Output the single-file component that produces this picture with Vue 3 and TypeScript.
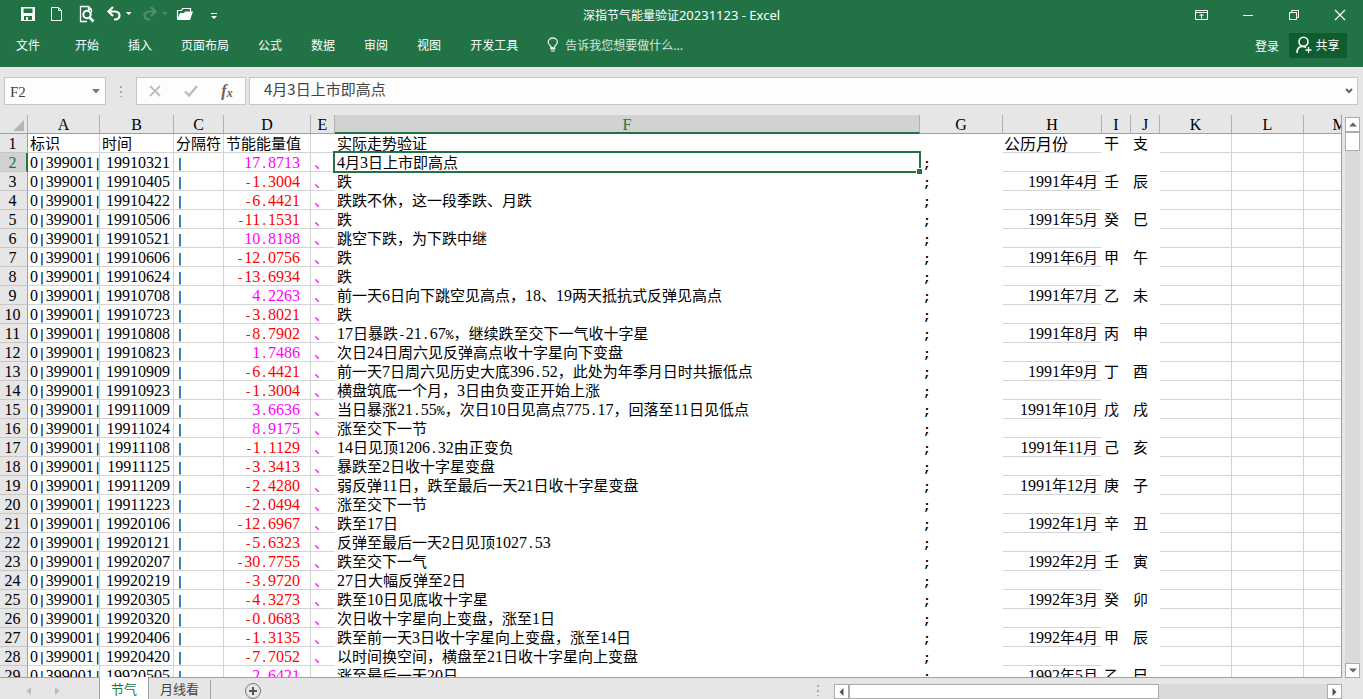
<script setup lang="ts">
import { ref } from 'vue'

interface Column { key: string; width: number }
interface Row { n: number; date: string; value: string; note: string; month: string; stem: string; branch: string }
interface Run { text: string; kind: 'num' | 'bar' | 'sym' | 'txt' }

const menus = ['文件', '开始', '插入', '页面布局', '公式', '数据', '审阅', '视图', '开发工具']

const columns: Column[] = [
  { key: 'A', width: 72 }, { key: 'B', width: 74 }, { key: 'C', width: 50 }, { key: 'D', width: 87 },
  { key: 'E', width: 24 }, { key: 'F', width: 585 }, { key: 'G', width: 83 }, { key: 'H', width: 99 },
  { key: 'I', width: 29 }, { key: 'J', width: 29 }, { key: 'K', width: 72 }, { key: 'L', width: 72 },
  { key: 'M', width: 72 },
]

const source: [string, string, string][] = [
  ['19910321', '17.8713', '4月3日上市即高点'],
  ['19910405', '-1.3004', '跌'],
  ['19910422', '-6.4421', '跌跌不休，这一段季跌、月跌'],
  ['19910506', '-11.1531', '跌'],
  ['19910521', '10.8188', '跳空下跌，为下跌中继'],
  ['19910606', '-12.0756', '跌'],
  ['19910624', '-13.6934', '跌'],
  ['19910708', '4.2263', '前一天6日向下跳空见高点，18、19两天抵抗式反弹见高点'],
  ['19910723', '-3.8021', '跌'],
  ['19910808', '-8.7902', '17日暴跌-21.67%，继续跌至交下一气收十字星'],
  ['19910823', '1.7486', '次日24日周六见反弹高点收十字星向下变盘'],
  ['19910909', '-6.4421', '前一天7日周六见历史大底396.52，此处为年季月日时共振低点'],
  ['19910923', '-1.3004', '横盘筑底一个月，3日由负变正开始上涨'],
  ['19911009', '3.6636', '当日暴涨21.55%，次日10日见高点775.17，回落至11日见低点'],
  ['19911024', '8.9175', '涨至交下一节'],
  ['19911108', '-1.1129', '14日见顶1206.32由正变负'],
  ['19911125', '-3.3413', '暴跌至2日收十字星变盘'],
  ['19911209', '-2.4280', '弱反弹11日，跌至最后一天21日收十字星变盘'],
  ['19911223', '-2.0494', '涨至交下一节'],
  ['19920106', '-12.6967', '跌至17日'],
  ['19920121', '-5.6323', '反弹至最后一天2日见顶1027.53'],
  ['19920207', '-30.7755', '跌至交下一气'],
  ['19920219', '-3.9720', '27日大幅反弹至2日'],
  ['19920305', '-4.3273', '跌至10日见底收十字星'],
  ['19920320', '-0.0683', '次日收十字星向上变盘，涨至1日'],
  ['19920406', '-1.3135', '跌至前一天3日收十字星向上变盘，涨至14日'],
  ['19920420', '-7.7052', '以时间换空间，横盘至21日收十字星向上变盘'],
  ['19920505', '2.6421', '涨至最后一天20日'],
]

const stems = '甲乙丙丁戊己庚辛壬癸'
const branches = '子丑寅卯辰巳午未申酉戌亥'

// Month, stem and branch appear on every second row, from April 1991 on.
const rows: Row[] = source.map(([date, value, note], i) => {
  const m = (i - 1) / 2
  const shown = i % 2 === 1
  const abs = 3 + m
  return {
    n: i + 2, date, value, note,
    month: shown ? `${1991 + Math.floor(abs / 12)}年${(abs % 12) + 1}月` : '',
    stem: shown ? stems[(8 + m) % 10] : '',
    branch: shown ? branches[(4 + m) % 12] : '',
  }
})

const headers: Record<string, string> = {
  A: '标识', B: '时间', C: '分隔符', D: '节能能量值', F: '实际走势验证', H: '公历月份', I: '干', J: '支',
}

function cell(row: Row, key: string): string {
  switch (key) {
    case 'A': return '0|399001|'
    case 'B': return row.date
    case 'C': return '|'
    case 'D': return row.value
    case 'E': return '、'
    case 'F': return row.note
    case 'G': return ';'
    case 'H': return row.month
    case 'I': return row.stem
    case 'J': return row.branch
    default: return ''
  }
}

function kindOf(text: string): Run['kind'] {
  if (/^[0-9]/.test(text)) return 'num'
  if (/^[-|]/.test(text)) return 'bar'
  if (/^[.%;]/.test(text)) return 'sym'
  return 'txt'
}

// Digits, half-width marks and Chinese text are set in different faces.
function runs(text: string): Run[] {
  return (text.match(/[0-9]+|[-|]+|[.%;]+|[^0-9.\-%|;]+/g) ?? []).map((t) => ({ text: t, kind: kindOf(t) }))
}

const address = ref('F2')
const formula = ref('4月3日上市即高点')
</script>

<template>
  <div class="app">
    <header class="top">
      <div class="titlebar">
        <div class="quick">
          <button class="q save" aria-label="保存">
            <svg width="16" height="16" viewBox="0 0 16 16"><path fill="#fff" fill-rule="evenodd" d="M1 1h14v14H1zM3.500 2.500v4.500h9V2.500zM4 10v4h2v-3h2v3h4v-4z" /></svg>
          </button>
          <button class="q" aria-label="新建">
            <svg width="14" height="16" viewBox="0 0 14 16"><path fill="none" stroke="#fff" d="M1.500 1.500h7l3 3v10h-10zM8.500 1.500v3h3" /></svg>
          </button>
          <button class="q preview" aria-label="打印预览">
            <svg width="16" height="18" viewBox="0 0 16 18"><path fill="none" stroke="#fff" stroke-width="1.300" d="M8 16.500H1.500v-15h8l3 3v3M9.500 1.500v3h3" /><circle cx="8" cy="9.500" r="3.700" fill="none" stroke="#fff" stroke-width="2" /><path stroke="#fff" stroke-width="2.500" d="M10.500 12.500l4 4" /></svg>
          </button>
          <button class="q undo" aria-label="撤消">
            <svg width="26" height="16" viewBox="0 0 26 16"><path fill="none" stroke="#fff" stroke-width="2.200" d="M1 5.500h7c6 0 6 8 0 8H7M6 1L1.500 5.500 6 10" /><path fill="#fff" d="M19 6h5.500l-2.700 3z" /></svg>
          </button>
          <button class="q redo" aria-label="恢复" disabled>
            <svg width="26" height="16" viewBox="0 0 26 16"><path fill="none" stroke="#4f9069" stroke-width="2.200" d="M14 5.500H7c-6 0-6 8 0 8h1M9 1l4.500 4.500L9 10" /><path fill="#4f9069" d="M20 6h5.500l-2.700 3z" /></svg>
          </button>
          <button class="q open" aria-label="打开">
            <svg width="18" height="16" viewBox="0 0 18 16"><path fill="none" stroke="#fff" stroke-width="1.200" d="M1.500 13V4.500h4l1-2h8V7" /><path fill="#fff" d="M4 7h4l1-1.500h8L14 14H1z" /></svg>
          </button>
          <button class="q more" aria-label="自定义快速访问工具栏">
            <svg width="8" height="8" viewBox="0 0 8 8"><path fill="#fff" d="M1 1h6v1H1zM1 4h6L4 7z" /></svg>
          </button>
        </div>
        <div class="title">深指节气能量验证<span class="latin">20231123 - Excel</span></div>
        <div class="window">
          <button aria-label="功能区显示选项"><svg width="14" height="12" viewBox="0 0 14 12"><path fill="none" stroke="#fff" d="M.5 1.500h12v9H.5zM.5 3.500h12M6.500 9.500V5M4.500 7l2-2 2 2" /></svg></button>
          <button aria-label="最小化"><svg width="12" height="12" viewBox="0 0 12 12"><path stroke="#fff" d="M1 6.500h10" /></svg></button>
          <button aria-label="还原"><svg width="12" height="12" viewBox="0 0 12 12"><path fill="none" stroke="#fff" d="M1.500 3.500h7v7h-7zM3.500 3.500v-2h7v7h-2" /></svg></button>
          <button aria-label="关闭"><svg width="12" height="12" viewBox="0 0 12 12"><path stroke="#fff" stroke-width="1.200" d="M1 1l10 10M11 1L1 11" /></svg></button>
        </div>
      </div>
      <nav class="menu">
        <button v-for="m in menus" :key="m" class="tab">{{ m }}</button>
        <button class="tell">
          <svg width="12" height="16" viewBox="0 0 12 16"><path fill="none" stroke="#e4f0e8" stroke-width="1.300" d="M4 11V9.500C2.500 8.200 1.200 7 1.200 5.300a4.600 4.300 0 0 1 9.200 0C10.400 7 9 8.200 7.600 9.500V11z" /><path fill="#fff" d="M3.500 10.500h4.700v2H3.500zM4 13.500h4v1H4z" /></svg>
          告诉我您想要做什么...
        </button>
        <span class="grow"></span>
        <button class="login">登录</button>
        <button class="share">
          <svg width="17" height="18" viewBox="0 0 17 18"><path fill="none" stroke="#fff" stroke-width="1.600" d="M1 17c0-4 2-6.500 5.500-6.500 1.500 0 2.500.4 3.500 1.200" /><circle cx="7.500" cy="5.700" r="4.500" fill="none" stroke="#fff" stroke-width="1.600" /><path stroke="#fff" stroke-width="1.300" d="M12.500 11v6M9.500 14h6" /></svg>
          共享
        </button>
      </nav>
    </header>

    <section class="formula-bar">
      <div class="box name-box">
        <input v-model="address" aria-label="名称框" />
        <svg width="8" height="5" viewBox="0 0 8 5"><path fill="#777" d="M0 0h8L4 4.500z" /></svg>
      </div>
      <span class="dots"></span>
      <div class="box tools">
        <button aria-label="取消"><svg width="12" height="12" viewBox="0 0 12 12"><path stroke="#bdbdbd" stroke-width="1.800" d="M1 1l10 10M11 1L1 11" /></svg></button>
        <button aria-label="输入"><svg width="14" height="12" viewBox="0 0 14 12"><path fill="none" stroke="#bdbdbd" stroke-width="2.400" d="M1 6.500l4 4L13 1" /></svg></button>
        <button class="fx" aria-label="插入函数">f<small>x</small></button>
      </div>
      <div class="box formula">
        <input v-model="formula" aria-label="编辑栏" />
        <svg width="8" height="6" viewBox="0 0 8 6"><path fill="none" stroke="#666" stroke-width="2" d="M1 1l3 3 3-3" /></svg>
      </div>
    </section>

    <main class="work">
      <div class="sheet">
        <table>
          <colgroup>
            <col class="w-row" />
            <col v-for="c in columns" :key="c.key" :class="'w-' + c.key" />
          </colgroup>
          <thead>
            <tr>
              <th class="corner"><svg width="11" height="11" viewBox="0 0 11 11"><path fill="#b4b4b4" d="M11 0v11H0z" /></svg></th>
              <th v-for="c in columns" :key="c.key" scope="col" :class="{ active: c.key === 'F' }">{{ c.key }}</th>
            </tr>
          </thead>
          <tbody>
            <tr>
              <th scope="row">1</th>
              <td v-for="c in columns" :key="c.key" :class="['c-' + c.key, 'head']">{{ headers[c.key] }}</td>
            </tr>
            <tr v-for="r in rows" :key="r.n">
              <th scope="row" :class="{ active: r.n === 2 }">{{ r.n }}</th>
              <td
                v-for="c in columns"
                :key="c.key"
                :class="['c-' + c.key, { neg: c.key === 'D' && r.value.startsWith('-'), selected: c.key === 'F' && r.n === 2 }]"
              ><span v-for="(p, i) in runs(cell(r, c.key))" :key="i" :class="p.kind">{{ p.text }}</span><i v-if="c.key === 'F' && r.n === 2" class="frame"></i></td>
            </tr>
          </tbody>
        </table>
      </div>
      <div class="vscroll">
        <button aria-label="向上滚动"><svg width="8" height="5" viewBox="0 0 8 5"><path fill="#666" d="M0 4.500h8L4 .5z" /></svg></button>
        <span class="vthumb"></span>
        <span class="track"></span>
        <button aria-label="向下滚动"><svg width="8" height="5" viewBox="0 0 8 5"><path fill="#666" d="M0 .5h8l-4 4z" /></svg></button>
      </div>
    </main>

    <footer class="bottom">
      <div class="arrows">
        <button aria-label="上一张"><svg width="5" height="8" viewBox="0 0 5 8"><path fill="#bbb" d="M5 0v8L.5 4z" /></svg></button>
        <button aria-label="下一张"><svg width="5" height="8" viewBox="0 0 5 8"><path fill="#bbb" d="M0 0v8l4.500-4z" /></svg></button>
      </div>
      <button class="sheet-tab current">节气</button>
      <button class="sheet-tab">月线看</button>
      <button class="add" aria-label="新工作表"><svg width="18" height="18" viewBox="0 0 18 18"><circle cx="9" cy="9" r="7.500" fill="none" stroke="#777" /><path stroke="#555" stroke-width="2" d="M9 5v8M5 9h8" /></svg></button>
      <span class="grow"></span>
      <span class="dots"></span>
      <div class="hscroll">
        <button aria-label="向左滚动"><svg width="5" height="8" viewBox="0 0 5 8"><path fill="#555" d="M4.500 0v8L.5 4z" /></svg></button>
        <span class="hthumb"></span>
        <span class="track"></span>
        <button aria-label="向右滚动"><svg width="5" height="8" viewBox="0 0 5 8"><path fill="#555" d="M.5 0v8l4-4z" /></svg></button>
      </div>
    </footer>
  </div>
</template>

<style>
html, body { margin: 0; overflow: hidden; }
</style>

<style scoped>
.app {
  height: 100vh;
  display: flex;
  flex-direction: column;
  overflow: hidden;
  background: #e6e6e6;
  color: #000;
  font-family: "Noto Sans CJK SC", sans-serif;
  font-size: 12px;
}
button {
  margin: 0;
  padding: 0;
  border: 0;
  background: none;
  color: inherit;
  font: inherit;
  display: flex;
  align-items: center;
  justify-content: center;
}
svg { display: block; flex: none; }
.grow { flex: 1; }

.top { background: #217346; color: #fff; height: 67px; flex: none; }
.titlebar { display: grid; grid-template-columns: 1fr auto 1fr; height: 29px; align-items: center; }
.quick { display: flex; align-items: center; padding: 0 0 2px 20px; }
.quick svg { overflow: visible; }
.save { width: 16px; }
.q + .q { margin-left: 14px; }
.q.preview { margin-left: 15px; }
.q.undo { margin-left: 12px; }
.q.redo { margin-left: 9px; }
.q.open { margin-left: 8px; }
.q.more { margin-left: 16px; padding-top: 4px; }
.title { line-height: 28px; }
.latin { font-family: "Noto Sans", sans-serif; font-size: 13px; line-height: 0; }
.window { display: flex; justify-content: flex-end; }
.window button { width: 46px; height: 28px; }
.menu { display: flex; align-items: center; padding: 2px 16px 0 4px; height: 28px; }
.tab { padding: 0 12px; line-height: 24px; }
.tab:first-child { margin-right: 11px; }
.tab + .tab { margin-right: 5px; }
.tell { gap: 6px; padding-left: 12px; line-height: 24px; color: #d6e8dc; }
.login { margin-right: 10px; }
.share { width: 58px; height: 25px; background: #0f5c2f; gap: 2px; line-height: 24px; }

.formula-bar { display: flex; align-items: center; height: 28px; padding: 10px 5px 10px 4px; flex: none; }
.box { box-sizing: border-box; height: 28px; border: 1px solid #c6c6c6; background: #fdfdfd; display: flex; align-items: center; }
.box input { border: 0; padding: 0; margin: 0; outline: 0; background: none; color: #444; min-width: 0; flex: 1; }
.name-box { width: 102px; padding: 0 5px; }
.name-box input { font: 15px/20px "Liberation Serif", serif; padding-top: 1px; }
.dots { width: 2px; height: 11px; margin: 0 14px; background: repeating-linear-gradient(#aaa 0 2px, transparent 2px 5px); }
.tools { width: 110px; }
.tools button { flex: 1; color: #666; }
.fx { font: italic bold 16px/18px "Liberation Serif", serif; }
.fx small { font-size: 12px; padding-top: 4px; }
.formula { flex: 1; margin-left: 3px; padding: 0 4px 0 14px; }
.formula input { font: 15px/22px "Noto Sans CJK SC", sans-serif; padding-bottom: 4px; }

.work { flex: 1; min-height: 0; display: flex; }
.sheet { flex: 1; min-width: 0; overflow: hidden; border-right: 1px solid #9f9f9f; border-bottom: 1px solid #9f9f9f; background: #fff; }
table { table-layout: fixed; border-collapse: separate; border-spacing: 0; width: 1376px; }
.w-row { width: 28px; }
.w-A { width: 72px; }
.w-B { width: 74px; }
.w-C { width: 50px; }
.w-D { width: 87px; }
.w-E { width: 24px; }
.w-F { width: 585px; }
.w-G { width: 83px; }
.w-H { width: 99px; }
.w-I, .w-J { width: 29px; }
.w-K, .w-L, .w-M { width: 72px; }
th, td { box-sizing: border-box; height: 19px; padding: 0; line-height: 18px; white-space: nowrap; vertical-align: bottom; }
th { font: 16px/18px "Liberation Serif", serif; background: #e6e6e6; text-align: center; }
tbody th { border-right: 1px solid #9f9f9f; border-bottom: 1px solid #c8c8c8; line-height: 16px; padding: 2px 2px 0 0; }
tbody th.active { background: #d2d2d2; color: #217346; border-right: 2px solid #217346; padding-right: 1px; }
thead th { border-right: 1px solid #b0b0b0; border-bottom: 1px solid #9f9f9f; padding-top: 2px; line-height: 16px; }
thead th.active { background: #d2d2d2; color: #217346; border-bottom: 2px solid #217346; line-height: 15px; }
.corner svg { margin: 0 3px 2px auto; }
td { border-bottom: 1px solid #d4d4d4; border-right: 1px solid #d4d4d4; font-size: 15px; text-align: left; }
td.c-E { border-right-color: transparent; color: #f0f; padding-left: 3px; }
td.c-F, td.c-G, td.c-I, td.c-J { border-color: transparent; }
td.c-H { border-right-color: transparent; text-align: right; padding-right: 3px; }
td.c-A { padding-left: 2px; }
td.c-B { text-align: right; padding-right: 3px; }
td.c-B.head { text-align: left; padding-left: 2px; }
td.c-C, td.c-F, td.c-I, td.c-J, td.c-G { padding-left: 2px; }
td.c-D { text-align: right; padding-right: 10px; color: #f0f; }
td.c-D.neg { color: #f00; }
td.c-D.head { color: #000; padding-right: 9px; }
td.c-H.head { font-size: 16px; text-align: left; padding-left: 1px; }
.num { font-family: "Liberation Serif", serif; font-size: 16px; line-height: 0; }
.sym { font-family: "Liberation Mono", monospace; font-size: 13px; line-height: 0; }
.bar { font-family: "DejaVu Sans Mono", monospace; font-size: 13px; line-height: 0; }
td.c-G .sym { font-weight: bold; }
td.c-G { padding-left: 3px; }
td.selected { position: relative; }
.frame { position: absolute; inset: -2px; border: 2px solid #217346; }
.frame::after { content: ""; position: absolute; right: -3px; bottom: -3px; width: 5px; height: 5px; background: #217346; border-top: 1px solid #fff; border-left: 1px solid #fff; }

.vscroll { width: 16px; margin: 2px 2px 0 3px; display: flex; flex-direction: column; }
.vscroll button, .vthumb { box-sizing: border-box; width: 15px; height: 15px; border: 1px solid #ababab; background: #fff; flex: none; }
.vthumb { height: 19px; }
.track { flex: 1; background: #dadada; }
.vscroll .track { width: 15px; }

.bottom { height: 21px; flex: none; display: flex; }
.arrows { width: 99px; display: flex; align-items: center; padding: 4px 0 0 26px; box-sizing: border-box; gap: 24px; }
.sheet-tab { font-size: 13px; line-height: 18px; color: #444; padding: 0 11px; margin-top: 2px; border-right: 1px solid #9f9f9f; align-items: flex-start; }
.sheet-tab.current { background: #fff; color: #217346; margin-top: -1px; padding: 3px 11px 0; border-left: 1px solid #9f9f9f; }
.add { margin: 4px 0 0 33px; width: 18px; height: 18px; }
.bottom .dots { margin: 7px 15px 0 0; }
.hscroll { width: 37.300%; height: 15px; margin: 6px 21px 0 0; display: flex; }
.hscroll button, .hthumb { box-sizing: border-box; height: 15px; width: 15px; border: 1px solid #ababab; background: #fff; flex: none; }
.hthumb { width: 61%; }
</style>
